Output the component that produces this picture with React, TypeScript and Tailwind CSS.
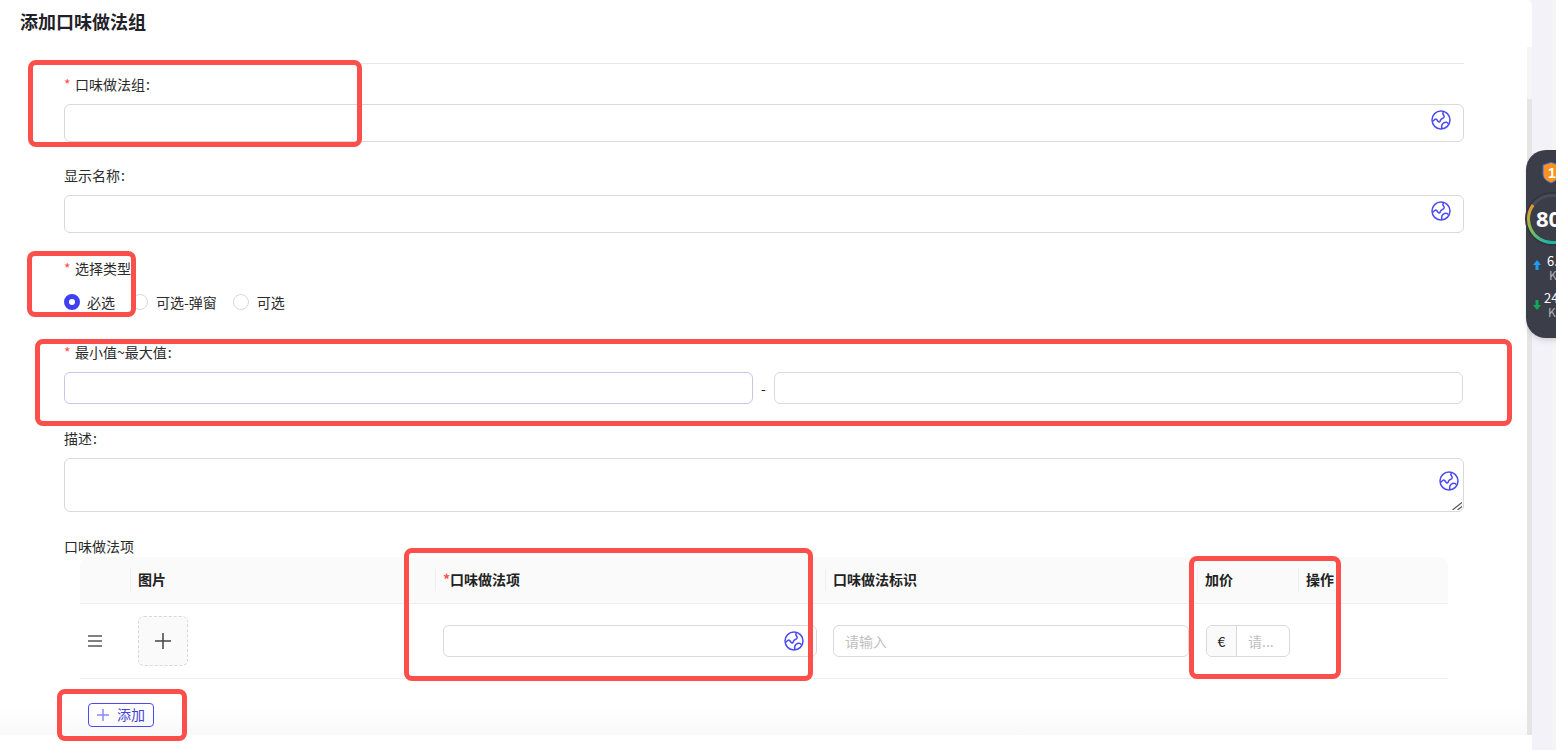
import type { ReactNode } from "react";

function GlobeIcon({ className = "" }: { className?: string }) {
  return (
    <svg viewBox="0 0 20 20" className={`h-5 w-5 ${className}`} fill="none" stroke="#4b4bf2" strokeWidth="1.5">
      <circle cx="10" cy="10" r="9" />
      <path d="M1.500 11.500L4 9.300c1-.8 2 .5 3 2 1 1.200 2 1 2.500-1 .5-2 2.500-1.500 3.500-3 .8-1.200-.5-2.500-1.200-3.500l.7-3" />
      <path d="M11 18.800c-.8-2.800.2-5.300 2.500-6.300 1.500-.6 3-.2 3.800 1" />
    </svg>
  );
}

function Label({ text, required, colon = true }: { text: string; required?: boolean; colon?: boolean }) {
  return (
    <div className="flex h-5 items-center pb-[2px] text-sm leading-5 text-[#2b2b2b]">
      {required && <span className="w-[11px] text-sm text-[#ff4d4f]">*</span>}
      <span>{text}</span>
      {colon && <span className="ml-[1px]">:</span>}
    </div>
  );
}

function TextInput({ focused }: { focused?: boolean }) {
  return (
    <input
      className={`h-8 min-w-0 flex-1 rounded-md border bg-white px-3 outline-none ${
        focused ? "border-[#c9c5e6]" : "border-[#d9d9d9]"
      }`}
    />
  );
}

function GlobeInput() {
  return (
    <div className="relative mt-[9px] h-[38px] rounded-md border border-[#d9d9d9] bg-white">
      <GlobeIcon className="absolute right-[12px] top-[5px]" />
    </div>
  );
}

function Radio({ label, checked }: { label: string; checked?: boolean }) {
  return (
    <label className={`flex items-center text-sm text-[#2b2b2b] ${checked ? "mr-px gap-[7px]" : "gap-2"}`}>
      {checked ? (
        <span className="h-4 w-4 rounded-full border-[5px] border-[#4040f2] bg-white" />
      ) : (
        <span className="h-4 w-4 rounded-full border border-[#d9d9d9] bg-white" />
      )}
      {label}
    </label>
  );
}

function HeadCell({ children, divider = true, className = "" }: { children?: ReactNode; divider?: boolean; className?: string }) {
  return (
    <div className={`relative flex items-center pb-[2px] pl-2 text-sm font-bold text-[#222] ${className}`}>
      {divider && <span className="absolute left-0 top-[12px] h-[22px] w-px bg-[#efefef]" />}
      {children}
    </div>
  );
}

function RedBox({ className }: { className: string }) {
  return <div className={`pointer-events-none absolute rounded-lg border-[5px] border-[#fb4f4b] ${className}`} />;
}

function SpeedWidget() {
  return (
    <div className="absolute left-[1526px] top-[150px] flex h-[188px] w-[80px] flex-col rounded-l-[20px] bg-[#3b3d49] text-white shadow-md">
      <svg viewBox="0 0 18 22" className="ml-[16px] mt-[11px] h-[23px] w-[18px]">
        <path d="M9 0.800 L17 3.500 V13 C17 17 13 20 9 21.500 C5 20 1 17 1 13 V3.500 Z" fill="#f7931e" stroke="#3f66d6" strokeWidth="1" />
        <text x="6" y="16.500" fill="#fff" fontSize="14" fontWeight="700" fontFamily="Liberation Sans">1</text>
      </svg>
      <div className="relative ml-[1px] mt-[11px] h-[50px] w-[56px]">
        <svg viewBox="0 0 56 50" className="absolute inset-0 h-full w-full overflow-visible" fill="none">
          <defs>
            <linearGradient id="gauge" x1="0" y1="0" x2="0.500" y2="1">
              <stop offset="0" stopColor="#f0932b" />
              <stop offset="0.500" stopColor="#8fc04a" />
              <stop offset="1" stopColor="#1fb5a5" />
            </linearGradient>
          </defs>
          <circle cx="25" cy="24" r="26" stroke="#33353f" strokeWidth="2" />
          <circle cx="25" cy="24" r="23.500" stroke="#4a4c58" strokeWidth="3" />
          <path d="M6.100 10 A23.500 23.500 0 0 0 25 47.500 H40" stroke="url(#gauge)" strokeWidth="3" />
        </svg>
        <span className="absolute left-[9px] top-[7px] text-[22px] font-bold leading-8 font-['Noto_Sans','Liberation_Sans',sans-serif]">80</span>
      </div>
      <div className="mt-[9px] flex items-start pl-[7px]">
        <svg viewBox="0 0 8 10" className="mt-[6px] h-[10px] w-[8px]">
          <path d="M4 0 L8 5 H5.500 V10 H2.500 V5 H0 Z" fill="#1e9bf0" />
        </svg>
        <div className="ml-[6px] flex flex-col text-xs leading-[14px]">
          <span className="text-[13px]">6.</span>
          <span className="ml-[2px] text-[#aeb0b8]">K</span>
        </div>
      </div>
      <div className="mt-[9px] flex items-start pl-[7px]">
        <svg viewBox="0 0 8 10" className="mt-[9px] h-[10px] w-[8px]">
          <path d="M4 10 L8 5 H5.500 V0 H2.500 V5 H0 Z" fill="#0fa958" />
        </svg>
        <div className="ml-[3px] flex flex-col text-xs leading-[14px]">
          <span className="text-[13px]">24</span>
          <span className="ml-[4px] text-[#aeb0b8]">K</span>
        </div>
      </div>
    </div>
  );
}

export default function App() {
  const tableCols = "grid grid-cols-[50px_305px_390px_372px_101px_150px]";

  return (
    <div className="relative flex h-screen w-full overflow-hidden bg-[#f5f5f5] font-['Noto_Sans_CJK_SC','Liberation_Sans',sans-serif]">
      <div className="flex w-[1532px] shrink-0 rounded-tr-md bg-white">
        <main className="w-[1527px] shrink-0">
          <div className="pl-5 pt-[9px] text-lg font-bold leading-6 text-[#1f2329]">添加口味做法组</div>

          <div className="ml-16 mt-[30px] w-[1400px]">
            <div className="border-t border-[#e8e8e8] pt-[11px]">
              <Label text="口味做法组" required />
              <GlobeInput />
            </div>

            <div className="mt-[24px]">
              <Label text="显示名称" />
              <div className="mt-px">
                <GlobeInput />
              </div>
            </div>

            <div className="mt-[26px]">
              <Label text="选择类型" required />
              <div className="mt-[12px] flex h-[22px] items-center gap-4">
                <Radio label="必选" checked />
                <Radio label="可选-弹窗" />
                <Radio label="可选" />
              </div>
            </div>

            <div className="mt-[30px]">
              <Label text="最小值~最大值" required />
              <div className="mr-px mt-[9px] flex h-8 items-center">
                <TextInput focused />
                <span className="w-[21px] text-center text-sm text-[#222]">-</span>
                <TextInput />
              </div>
            </div>

            <div className="mt-[25px]">
              <Label text="描述" />
              <div className="relative mt-[9px] h-[54px]">
                <textarea className="block h-[54px] w-full resize-none rounded-md border border-[#d9d9d9] bg-white px-3 outline-none" />
                <GlobeIcon className="absolute right-[5px] top-[13px]" />
                <svg viewBox="0 0 10 8" className="absolute bottom-[2px] right-[2px] h-2 w-[10px]" stroke="#555" strokeWidth="1.200">
                  <path d="M0.500 8L10 0.500M5.500 8L10 4.500" />
                </svg>
              </div>
            </div>

            <div className="mt-[25px]">
              <Label text="口味做法项" colon={false} />
            </div>
            <div className="ml-4 w-[1368px]">
              <div className={`${tableCols} h-[47px] rounded-t-lg border-b border-[#efefef] bg-[#fafafa]`}>
                <HeadCell divider={false} />
                <HeadCell>图片</HeadCell>
                <HeadCell>
                  <span className="text-[#ff4d4f]">*</span>口味做法项
                </HeadCell>
                <HeadCell>口味做法标识</HeadCell>
                <HeadCell>加价</HeadCell>
                <HeadCell>操作</HeadCell>
              </div>
              <div className={`${tableCols} h-[75px] items-center border-b border-[#efefef]`}>
                <div className="flex flex-col gap-[3px] pl-2">
                  <span className="h-[2px] w-[14px] bg-[#808080]" />
                  <span className="h-[2px] w-[14px] bg-[#808080]" />
                  <span className="h-[2px] w-[14px] bg-[#808080]" />
                </div>
                <div className="pl-2">
                  <div className="flex h-[50px] w-[50px] items-center justify-center rounded-md border border-dashed border-[#d9d9d9] bg-[#fafafa]">
                    <svg viewBox="0 0 16 16" className="h-4 w-4" stroke="#444" strokeWidth="1.500">
                      <path d="M8 0V16M0 8H16" />
                    </svg>
                  </div>
                </div>
                <div className="pl-2">
                  <div className="relative h-8 w-[374px] rounded-md border border-[#d9d9d9] bg-white">
                    <GlobeIcon className="absolute right-[12px] top-[5px]" />
                  </div>
                </div>
                <div className="pl-2">
                  <input
                    placeholder="请输入"
                    className="block h-8 w-[356px] rounded-md border border-[#d9d9d9] bg-white px-[11px] text-sm outline-none placeholder:text-[#bfbfbf]"
                  />
                </div>
                <div className="pl-[9px]">
                  <div className="flex h-8 w-[84px] rounded-md border border-[#d9d9d9] bg-white">
                    <span className="flex w-[30px] items-center justify-center rounded-l-md border-r border-[#d9d9d9] bg-[#fafafa] text-sm text-[#222]">€</span>
                    <span className="flex items-center pl-[11px] text-sm text-[#bfbfbf]">请...</span>
                  </div>
                </div>
                <div />
              </div>
              <button className="relative z-10 ml-2 mt-[24px] flex h-6 w-[66px] items-center justify-center gap-[8px] rounded border border-[#4b4bf2] pb-[2px] text-sm text-[#4343d8]">
                <svg viewBox="0 0 12 12" className="mt-[2px] h-3 w-3" stroke="#8c8cf7" strokeWidth="1.500">
                  <path d="M6 0V12M0 6H12" />
                </svg>
                添加
              </button>
            </div>
          </div>
        </main>
        <div className="flex w-[5px] shrink-0 flex-col">
          <div className="h-[47px]" />
          <div className="h-[52px] bg-[#f5f5f5]" />
          <div className="h-[636px] bg-[#e5e5e5]" />
        </div>
      </div>
      <div className="w-[20px] shrink-0 bg-[#f3f2f9]" />

      <div className="pointer-events-none absolute left-0 top-[707px] h-[28px] w-[1527px] bg-gradient-to-b from-white/0 to-[#f9f9f9]" />

      <SpeedWidget />

      <RedBox className="left-[28px] top-[60px] h-[87px] w-[334px]" />
      <RedBox className="left-[27px] top-[251px] h-[66px] w-[109px]" />
      <RedBox className="left-[35px] top-[339px] h-[87px] w-[1477px]" />
      <RedBox className="left-[404px] top-[548px] h-[133px] w-[409px]" />
      <RedBox className="left-[1189px] top-[556px] h-[123px] w-[152px]" />
      <RedBox className="left-[57px] top-[689px] h-[52px] w-[130px]" />
    </div>
  );
}
